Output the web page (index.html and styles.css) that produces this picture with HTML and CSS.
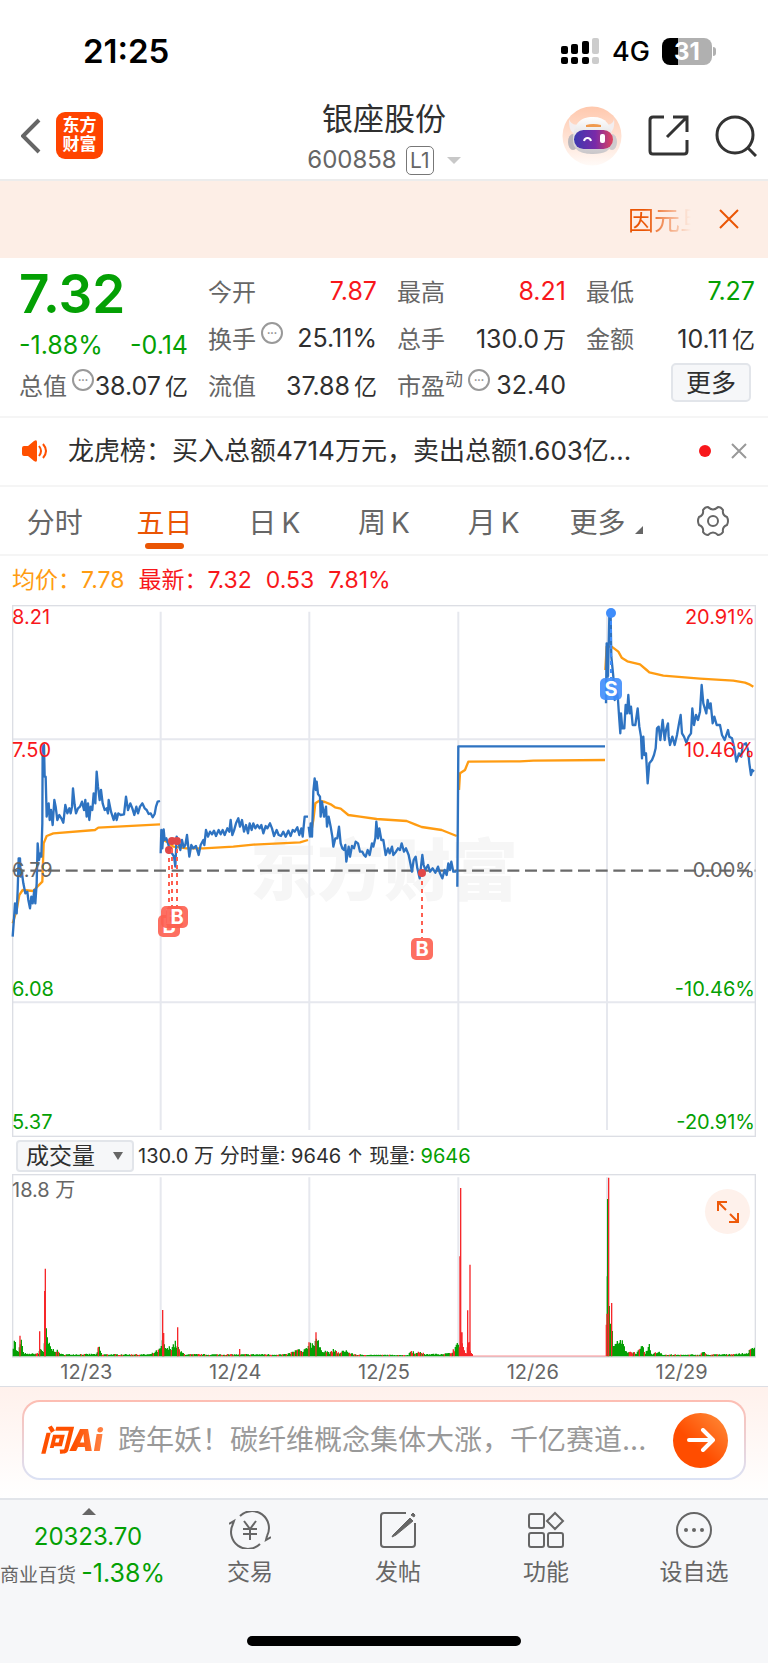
FILE: index.html
```html
<!DOCTYPE html>
<html lang="zh-CN">
<head>
  <meta charset="UTF-8">
  <meta name="viewport" content="width=device-width, initial-scale=1">
  <title>银座股份 600858</title>
  <link rel="stylesheet" href="styles.css">
</head>
<body>
  <div class="status-bar">
    <span class="time">21:25</span>
    <div class="status-right">
      <svg width="39" height="28" viewBox="0 0 39 28">
        <g fill="#000">
          <rect x="0" y="9" width="7" height="8" rx="2"/><rect x="0" y="20" width="7" height="7" rx="2"/>
          <rect x="10" y="7" width="7" height="10" rx="2"/><rect x="10" y="20" width="7" height="7" rx="2"/>
          <rect x="21" y="4" width="7" height="13" rx="2"/><rect x="21" y="20" width="7" height="7" rx="2"/>
        </g>
        <g fill="#ccc"><rect x="31" y="1" width="7" height="16" rx="2"/><rect x="31" y="20" width="7" height="7" rx="2"/></g>
      </svg>
      <span class="network">4G</span>
      <span class="battery">31</span>
    </div>
  </div>

  <header class="header">
    <div class="header-left">
      <a href="#" class="back" aria-label="返回">
        <svg width="20" height="36" viewBox="0 0 20 36"><path d="M18 2 2 18l16 16" fill="none" stroke="#666" stroke-width="4"/></svg>
      </a>
      <a href="#" class="logo">东方<br>财富</a>
    </div>
    <div class="header-title">
      <h1>银座股份</h1>
      <div class="code"><span>600858</span><span class="level">L1</span><i class="caret"></i></div>
    </div>
    <div class="header-right">
      <a href="#" aria-label="智能助手">
        <svg width="60" height="60" viewBox="0 0 60 60">
          <defs>
            <linearGradient id="halo" x1="0" y1="0" x2="0" y2="1"><stop offset="0" stop-color="#ffc8ad"/><stop offset="1" stop-color="#fffaf7"/></linearGradient>
            <linearGradient id="visor" x1="0" y1="0" x2="1" y2="0"><stop offset="0" stop-color="#3b39b0"/><stop offset=".55" stop-color="#7a2aa8"/><stop offset="1" stop-color="#e0455c"/></linearGradient>
            <linearGradient id="shell" x1="0" y1="0" x2="0" y2="1"><stop offset="0" stop-color="#fff"/><stop offset="1" stop-color="#c9c6c9"/></linearGradient>
          </defs>
          <circle cx="30" cy="30" r="29.500" fill="url(#halo)"/>
          <ellipse cx="11" cy="36" rx="5" ry="8" fill="#bbb7bb"/>
          <ellipse cx="50" cy="36" rx="5" ry="8" fill="#cfcbce"/>
          <path d="M7 13c0 8 1 13 6 15l8-10c-6 2-12 1-14-5zM52 13c1 8-1 12-5 15l-8-10c6 2 12 1 13-5z" fill="#f3eef0"/>
          <path d="M11 34c0-16 7-23 20-23s19 8 19 23c0 11-8 14-19 14s-20-3-20-14z" fill="url(#shell)"/>
          <path d="M24 19q7-2 15 0v2H24z" fill="#f09a4e"/>
          <rect x="12" y="24" width="39" height="19" rx="9.500" fill="url(#visor)"/>
          <path d="M22 35c1-4 6-4 7 0" fill="none" stroke="#fff" stroke-width="2"/>
          <rect x="38" y="28" width="5" height="9" rx="2" fill="#fff"/>
        </svg>
      </a>
      <a href="#" aria-label="分享">
        <svg width="41" height="41" viewBox="0 0 41 41" fill="none" stroke="#333" stroke-width="3">
          <path d="M16 2H5q-3 0-3 3v31q0 3 3 3h31q3 0 3-3V25"/><path d="M25 2h14v15M39 2 19 22"/>
        </svg>
      </a>
      <a href="#" aria-label="搜索">
        <svg width="42" height="42" viewBox="0 0 42 42" fill="none" stroke="#333" stroke-width="3"><circle cx="20" cy="20" r="18"/><path d="m33 33 8 8"/></svg>
      </a>
    </div>
  </header>

  <div class="banner">
    <span class="banner-text">因元旦</span>
    <button type="button" aria-label="关闭公告">
      <svg width="20" height="20" viewBox="0 0 20 20"><path d="m1 1 18 18M19 1 1 19" stroke="#ea5504" stroke-width="2"/></svg>
    </button>
  </div>

  <section class="quote">
    <div class="quote-col">
      <strong class="price">7.32</strong>
      <div class="change"><span>-1.88%</span><span>-0.14</span></div>
      <div class="item"><span class="name">总值</span><i class="info">•••</i><span class="num">38.07<small>亿</small></span></div>
    </div>
    <div class="quote-col">
      <div class="item"><span class="name">今开</span><span class="num red">7.87</span></div>
      <div class="item"><span class="name">换手</span><i class="info">•••</i><span class="num">25.11%</span></div>
      <div class="item"><span class="name">流值</span><span class="num">37.88<small>亿</small></span></div>
    </div>
    <div class="quote-col">
      <div class="item"><span class="name">最高</span><span class="num red">8.21</span></div>
      <div class="item"><span class="name">总手</span><span class="num">130.0<small>万</small></span></div>
      <div class="item"><span class="name">市盈<sup>动</sup></span><i class="info">•••</i><span class="num">32.40</span></div>
    </div>
    <div class="quote-col">
      <div class="item"><span class="name">最低</span><span class="num green">7.27</span></div>
      <div class="item"><span class="name">金额</span><span class="num">10.11<small>亿</small></span></div>
      <div class="item"><button type="button" class="more">更多</button></div>
    </div>
  </section>

  <div class="news">
    <svg width="26" height="22" viewBox="0 0 26 22">
      <path d="M0 8q0-2 2-2h4l6-5q3-2 3 1v18q0 3-3 1l-6-5H2q-2 0-2-2z" fill="#ff5000"/>
      <path d="M17 6q4 5 0 10M21 4q6 7 0 14" fill="none" stroke="#ff5000" stroke-width="2"/>
    </svg>
    <a href="#" class="news-text">龙虎榜：买入总额4714万元，卖出总额1.603亿...</a>
    <i class="dot"></i>
    <button type="button" aria-label="关闭消息">
      <svg width="16" height="16" viewBox="0 0 16 16"><path d="m1 1 14 14M15 1 1 15" stroke="#999" stroke-width="2"/></svg>
    </button>
  </div>

  <nav class="tabs">
    <a href="#">分时</a>
    <a href="#" class="active">五日</a>
    <a href="#">日&thinsp;K</a>
    <a href="#">周&thinsp;K</a>
    <a href="#">月&thinsp;K</a>
    <a href="#" class="more-tab">更多<i></i></a>
    <a href="#" aria-label="设置">
      <svg width="32" height="32" viewBox="0 0 32 32" fill="none" stroke="#666" stroke-width="2">
        <circle cx="16" cy="16" r="5"/>
        <path d="M11 2q5 5 10 0 3 0 5 3-1 5 4 7 2 4 0 8-5 2-4 7-2 3-5 3-5-5-10 0-3 0-5-3 1-5-4-7-2-4 0-8 5-2 4-7 2-3 5-3z" stroke-linejoin="round"/>
      </svg>
    </a>
  </nav>

  <div class="legend">
    <span class="avg">均价：7.78</span>
    <span>最新：7.32</span>
    <span>0.53</span>
    <span>7.81%</span>
  </div>

  <svg class="chart" viewBox="0 0 768 533">
    <text class="watermark" x="384" y="290" text-anchor="middle">东方财富</text>
    <g transform="scale(.33333)">
      <path class="grid" d="M482 20V1575M928 20V1575M1375 20V1575M1821 20V1575M38 403H2266M38 1192H2266"/>
      <rect class="frame" x="38" y="2" width="2228" height="1592"/>
      <path class="zero" d="M38 797H2266"/>
      <g id="lines"></g>
    </g>
    <g id="marks"></g>
    <g class="axis red"><text x="12" y="19">8.21</text><text x="12" y="152">7.50</text></g>
    <g class="axis"><text x="12" y="272">6.79</text></g>
    <g class="axis green"><text x="12" y="391">6.08</text><text x="12" y="524">5.37</text></g>
    <g class="axis red" text-anchor="end"><text x="755" y="19">20.91%</text><text x="755" y="152">10.46%</text></g>
    <g class="axis" text-anchor="end"><text x="755" y="272">0.00%</text></g>
    <g class="axis green" text-anchor="end"><text x="755" y="391">-10.46%</text><text x="755" y="524">-20.91%</text></g>
  </svg>

  <div class="volume-head">
    <div class="select-wrap">
      <select aria-label="指标"><option>成交量</option><option>MACD</option></select>
    </div>
    <span>130.0 万 分时量: 9646 ↑ 现量: <b>9646</b></span>
  </div>

  <div class="volume">
    <svg class="chart" viewBox="0 0 768 184">
      <g transform="scale(.33333)">
        <path class="grid" d="M482 10V547M928 10V547M1375 10V547M1821 10V547"/>
        <rect class="frame" x="38" y="2" width="2228" height="547"/>
        <path id="volGreen" stroke="#04a004" stroke-width="4"/>
        <path id="volRed" stroke="#f6272a" stroke-width="4"/>
      </g>
      <g class="axis"><text x="12" y="23">18.8 万</text></g>
    </svg>
    <button type="button" class="expand" aria-label="全屏">
      <svg width="24" height="24" viewBox="0 0 24 24" fill="none" stroke="#ee5a0a" stroke-width="2"><path d="M2 11V2h9M2 2l8 8M13 22h9v-9M22 22l-8-8"/></svg>
    </button>
  </div>
  <div class="dates"><span>12/23</span><span>12/24</span><span>12/25</span><span>12/26</span><span>12/29</span></div>

  <div class="ask">
    <div class="ask-box">
      <span class="ask-logo">问Ai</span>
      <input type="text" aria-label="问Ai" placeholder="跨年妖！碳纤维概念集体大涨，千亿赛道...">
      <button type="button" aria-label="发送">
        <svg width="28" height="24" viewBox="0 0 28 24" fill="none" stroke="#fff" stroke-width="4" stroke-linecap="round" stroke-linejoin="round"><path d="M2 12h23M16 2l10 10-10 10"/></svg>
      </button>
    </div>
  </div>

  <footer class="bottom">
    <nav class="bottom-nav">
      <a href="#" class="index">
        <i></i>
        <span class="points">20323.70</span>
        <span class="sector">商业百货 <b>-1.38%</b></span>
      </a>
      <a href="#">
        <svg viewBox="0 0 42 38">
          <path d="M11 5a17 17 0 0 1 27 20M38 25l-1 4 5-3M31 33A17 17 0 0 1 4 13M4 13l1-3-5 3"/>
          <path d="m15 10 6 8 6-8M21 18v11M14 18h14M14 23h14"/>
        </svg>
        交易
      </a>
      <a href="#">
        <svg viewBox="0 0 38 38">
          <path d="M27 2H5q-3 0-3 3v28q0 3 3 3h28q3 0 3-3V12"/>
          <path d="M14 24 31 7l3 3-17 14-4 2zM32 4l2-2 2 2-1 2z" fill="#666" stroke-width="1"/>
        </svg>
        发帖
      </a>
      <a href="#">
        <svg viewBox="0 0 38 38">
          <rect x="2" y="3" width="15" height="14" rx="2"/><rect x="2" y="22" width="15" height="14" rx="2"/><rect x="21" y="22" width="15" height="14" rx="2"/>
          <path d="m28 2 8 8-8 8-8-8z"/>
        </svg>
        功能
      </a>
      <a href="#">
        <svg viewBox="0 0 38 38">
          <circle cx="19" cy="19" r="17"/>
          <g fill="#666" stroke="none"><circle cx="11" cy="19" r="2"/><circle cx="19" cy="19" r="2"/><circle cx="27" cy="19" r="2"/></g>
        </svg>
        设自选
      </a>
    </nav>
    <div class="home-bar"></div>
  </footer>

  <script src="chart.js"></script>
</body>
</html>
```
FILE: styles.css
```css
* {
  box-sizing: border-box;
}
body {
  margin: 0;
  background: #fff;
  color: #2f2f2f;
  font-family: Inter, "Noto Sans CJK SC", sans-serif;
  font-size: 24px;
}
a {
  color: inherit;
  text-decoration: none;
}
button {
  padding: 0;
  border: none;
  background: none;
  font-family: inherit;
  color: inherit;
  cursor: pointer;
}
svg {
  display: block;
}
i {
  font-style: normal;
}
.red { color: #f8171b; }
.green { color: #04a004; }

/* 状态栏 */
.status-bar {
  display: flex;
  justify-content: space-between;
  align-items: center;
  height: 92px;
  padding: 10px 52px 0 83px;
  color: #000;
}
.time {
  font-size: 33px;
  font-weight: 600;
}
.status-right {
  display: flex;
  align-items: center;
}
.network {
  margin: 0 12px;
  font-size: 27px;
  font-weight: 500;
}
.battery {
  position: relative;
  width: 50px;
  height: 27px;
  margin-right: 4px;
  border-radius: 8px;
  background: linear-gradient(90deg, #000 32%, #b0b0b0 32%);
  color: #fff;
  font-size: 24px;
  font-weight: 700;
  line-height: 27px;
  text-align: center;
}
.battery::after {
  content: "";
  position: absolute;
  left: 51px;
  top: 9px;
  width: 3px;
  height: 9px;
  border-radius: 0 3px 3px 0;
  background: #b0b0b0;
}

/* 顶部 */
.header {
  display: grid;
  grid-template-columns: 1fr auto 1fr;
  align-items: center;
  height: 89px;
  padding: 0 11px;
  border-bottom: 2px solid #ececec;
}
.header-left,
.header-right {
  display: flex;
  align-items: center;
}
.header-left {
  gap: 15px;
  padding-left: 10px;
}
.header-right {
  justify-content: flex-end;
  gap: 26px;
}
.logo {
  width: 47px;
  height: 47px;
  padding-top: 4px;
  border-radius: 9px;
  background: #ff4400;
  color: #fff;
  font-size: 17px;
  font-weight: 700;
  line-height: 19px;
  text-align: center;
}
.header-title {
  padding-top: 5px;
}
.header-title h1 {
  margin: 0;
  font-size: 31px;
  font-weight: 400;
  line-height: 44px;
  text-align: center;
}
.code {
  display: flex;
  align-items: center;
  line-height: 38px;
  color: #666;
}
.level {
  width: 28px;
  height: 29px;
  margin: 0 13px 0 9px;
  border: 1px solid #777;
  border-radius: 5px;
  font-size: 21px;
  line-height: 27px;
  text-align: center;
}
.caret {
  border: 7px solid transparent;
  border-top-color: #c8c8c8;
  border-bottom: none;
}

.banner {
  display: flex;
  justify-content: flex-end;
  align-items: center;
  gap: 28px;
  height: 77px;
  padding: 0 29px 2px 0;
  background: #fdeee6;
}
.banner-text {
  width: 63px;
  overflow: hidden;
  white-space: nowrap;
  font-size: 26px;
  color: transparent;
  background: linear-gradient(90deg, #ea5504 25%, rgba(234, 85, 4, 0));
  -webkit-background-clip: text;
  background-clip: text;
}

/* 行情 */
.quote {
  display: grid;
  grid-template-columns: repeat(4, 1fr);
  gap: 20px;
  padding: 9px 13px 8px 19px;
  border-bottom: 2px solid #f5f5f5;
}
.price {
  display: block;
  font-size: 53px;
  font-weight: 600;
  line-height: 54px;
  padding-bottom: 6px;
  color: #04a004;
}
.change {
  display: flex;
  justify-content: space-between;
  font-size: 25px;
  line-height: 36px;
  height: 34px;
  color: #04a004;
}
.item {
  display: flex;
  align-items: center;
  height: 47px;
  white-space: nowrap;
}
.name {
  color: #666;
}
.name sup {
  font-size: 18px;
  line-height: 18px;
}
.num {
  margin-left: auto;
  font-size: 25px;
}
.num small {
  margin-left: 4px;
  font-size: 23px;
}
.info {
  width: 22px;
  height: 22px;
  margin: 0 0 10px 5px;
  border: 2px solid #999;
  border-radius: 50%;
  color: #888;
  font-size: 6px;
  line-height: 18px;
  text-align: center;
}
.more {
  width: 80px;
  height: 39px;
  margin: 0 4px 4px auto;
  border: 2px solid #e2e5ea;
  border-radius: 5px;
  background: #f6f7f9;
  font-size: 25px;
  line-height: 34px;
}

.news {
  display: flex;
  align-items: center;
  height: 69px;
  padding: 0 21px 2px 22px;
  border-bottom: 2px solid #f5f5f5;
}
.news-text {
  flex: 1;
  margin-left: 20px;
  font-size: 26px;
  line-height: 32px;
  white-space: nowrap;
}
.dot {
  width: 12px;
  height: 12px;
  margin-right: 20px;
  border-radius: 50%;
  background: #f8171b;
}

.tabs {
  display: grid;
  grid-template-columns: repeat(7, 1fr);
  height: 69px;
  border-bottom: 2px solid #f5f5f5;
  font-size: 28px;
  color: #666;
}
.tabs a {
  position: relative;
  display: flex;
  justify-content: center;
  align-items: center;
}
.tabs .active {
  color: #ea5504;
}
.tabs .active::after {
  content: "";
  position: absolute;
  bottom: 5px;
  width: 39px;
  height: 6px;
  border-radius: 3px;
  background: #ea5504;
}
.tabs .more-tab {
  padding-left: 6px;
}
.more-tab i {
  align-self: flex-end;
  margin: 0 0 20px 10px;
  border: 4px solid #666;
  border-top-color: transparent;
  border-left-color: transparent;
}

/* 走势图 */
.legend {
  display: flex;
  gap: 14px;
  padding-left: 12px;
  font-size: 23px;
  line-height: 49px;
  color: #f8171b;
}
.legend .avg {
  color: #ff9c12;
}
.chart {
  width: 100%;
  height: auto;
}
.chart path,
.chart polyline,
.chart rect.frame {
  fill: none;
}
.grid {
  stroke: #e6e8ee;
  stroke-width: 6;
}
.frame {
  stroke: #dcdee4;
  stroke-width: 4;
}
.zero {
  stroke: #6a6a6a;
  stroke-width: 7;
  stroke-dasharray: 36 17;
}
.watermark {
  fill: #f6f6f6;
  font-size: 67px;
  font-weight: 900;
}
.price-line,
.avg-line {
  stroke: #2e73c1;
  stroke-width: 7;
  stroke-linejoin: round;
}
.avg-line {
  stroke: #ff9c12;
}
.axis {
  font-size: 20px;
  fill: #666;
}
.axis.red { fill: #f8171b; }
.axis.green { fill: #04a004; }
.mark-text {
  fill: #fff;
  font-size: 20px;
  font-weight: 700;
  text-anchor: middle;
}

.volume-head {
  display: flex;
  align-items: center;
  gap: 4px;
  height: 36px;
  padding-left: 16px;
  font-size: 20px;
  line-height: 32px;
  white-space: nowrap;
}
.volume-head b {
  font-weight: 400;
  color: #04a004;
}
.select-wrap {
  position: relative;
}
.select-wrap::after {
  content: "";
  position: absolute;
  right: 11px;
  top: 12px;
  border: 5px solid transparent;
  border-top: 8px solid #666;
  border-bottom: none;
}
select {
  display: block;
  width: 118px;
  height: 32px;
  padding: 0 0 0 8px;
  appearance: none;
  border: 2px solid #e2e5ea;
  border-radius: 4px;
  background: #f6f7f9;
  color: #2f2f2f;
  font-family: inherit;
  font-size: 23px;
  line-height: 28px;
}
.volume {
  position: relative;
}
.expand {
  position: absolute;
  right: 18px;
  top: 15px;
  display: flex;
  justify-content: center;
  align-items: center;
  width: 45px;
  height: 45px;
  border-radius: 50%;
  background: #fef1eb;
}
.dates {
  display: grid;
  grid-template-columns: repeat(5, 1fr);
  padding: 0 12px;
  font-size: 20px;
  line-height: 28px;
  color: #666;
  text-align: center;
}

/* 问Ai */
.ask {
  padding: 13px 22px 18px;
  border-top: 1px solid #dcdee4;
  background: linear-gradient(#fff1ec, #fff);
}
.ask-box {
  display: flex;
  align-items: center;
  height: 80px;
  padding: 0 16px;
  border: 2px solid transparent;
  border-radius: 18px;
  background: linear-gradient(#fff, #fff) padding-box, linear-gradient(#fdbdb2, #dbe2f5) border-box;
}
.ask-logo {
  flex: none;
  width: 68px;
  font-size: 30px;
  font-weight: 900;
  font-style: italic;
  line-height: 40px;
  white-space: nowrap;
  color: transparent;
  background: linear-gradient(90deg, #ff5000 50%, #ff8a50);
  -webkit-background-clip: text;
  background-clip: text;
}
.ask-box input {
  flex: 1;
  min-width: 0;
  margin-left: 10px;
  padding: 0;
  border: none;
  outline: none;
  background: none;
  font-family: inherit;
  font-size: 28px;
}
.ask-box input::placeholder {
  color: #999;
}
.ask-box button {
  display: flex;
  justify-content: center;
  align-items: center;
  width: 55px;
  height: 55px;
  border-radius: 50%;
  background: linear-gradient(45deg, #ff4d00 40%, #ff8f3c);
}

/* 底部 */
.bottom {
  padding-bottom: 17px;
  border-top: 2px solid #e2e5ea;
  background: #f6f7f9;
}
.bottom-nav {
  display: grid;
  grid-template-columns: 176fr 148fr 148fr 148fr 148fr;
  height: 136px;
  color: #666;
}
.bottom-nav a {
  display: flex;
  flex-direction: column;
  align-items: center;
  padding-top: 11px;
  font-size: 23px;
  line-height: 46px;
  white-space: nowrap;
}
.bottom-nav svg {
  height: 38px;
  fill: none;
  stroke: #666;
  stroke-width: 2;
}
.bottom-nav .index {
  align-items: flex-start;
  padding-top: 8px;
}
.index i {
  margin-left: 82px;
  border: 7px solid transparent;
  border-top: none;
  border-bottom-color: #666;
}
.index .points {
  width: 176px;
  font-size: 24px;
  line-height: 44px;
  text-align: center;
  color: #04a004;
}
.index .sector {
  font-size: 19px;
  line-height: 28px;
}
.index b {
  font-size: 25px;
  font-weight: 400;
  color: #04a004;
}
.home-bar {
  width: 274px;
  height: 10px;
  margin: 0 auto;
  border-radius: 5px;
  background: #000;
}
```
FILE: chart.js
```js
const NS = 'http://www.w3.org/2000/svg';

// 每日走势: x 为当日分组的横向偏移
const days = [
  {
    x: 0,
    avg: '38,1000 50,960 58,915 68,900 100,903 112,890 127,875 131,760 140,738 160,730 285,720 295,713 480,703',
    price: '38,1040 42,985 45,940 50,970 53,900 56,805 60,805 62,860 66,850 70,880 76,910 82,905 85,930 90,955 94,920 98,940 103,900 106,940 110,880 113,760 117,810 121,790 124,800 127,700 128,465 132,465 134,560 137,560 140,680 146,640 149,690 153,660 158,705 163,630 167,650 172,690 178,675 184,685 190,698 196,645 202,670 208,655 212,670 216,650 219,595 224,645 228,670 234,655 240,650 246,635 252,660 256,630 260,680 264,640 268,690 272,650 277,660 281,610 286,640 290,545 294,590 299,630 303,600 308,640 314,660 320,655 324,670 326,630 333,665 341,690 346,670 350,690 355,670 362,675 372,673 378,620 384,660 391,640 397,655 403,675 409,650 414,670 420,650 427,640 434,655 440,660 446,672 452,670 458,682 464,672 468,650 473,635 480,633'
  },
  {
    x: 0,
    avg: '490,750 500,755 520,770 560,775 610,775 700,770 760,764 900,757 924,750',
    price: '482,790 484,720 487,775 491,718 494,750 499,745 504,760 510,780 516,790 522,800 526,830 530,740 536,760 541,780 546,750 551,772 556,765 561,735 568,800 574,765 580,775 588,768 596,795 602,765 610,750 613,765 618,720 624,740 630,725 636,733 642,722 648,738 656,720 662,733 668,720 674,735 682,715 688,725 692,690 697,735 702,722 708,700 715,685 720,710 726,690 732,725 738,705 744,730 749,700 755,720 760,700 766,715 772,705 779,715 784,705 790,730 797,708 802,715 810,700 816,715 822,738 830,720 836,735 843,738 850,725 857,740 865,722 872,738 878,720 884,725 892,712 898,735 904,715 908,740 914,680 924,680'
  },
  {
    x: 900,
    avg: '32,735 40,690 46,640 58,632 75,636 92,643 105,652 122,656 145,675 180,680 230,687 320,693 345,703 365,711 425,720 470,738',
    price: '26,710 30,740 32,700 36,740 40,605 44,565 48,600 50,575 54,612 60,620 62,680 66,635 72,680 78,650 81,710 86,680 92,710 97,740 100,770 106,745 112,745 117,710 122,760 127,775 132,780 136,765 139,815 146,770 150,800 156,768 162,775 167,755 174,760 180,785 187,785 192,795 197,800 203,780 209,795 216,760 220,770 226,745 229,695 234,745 238,715 244,750 250,750 257,795 264,775 269,790 276,770 280,795 288,785 294,775 300,780 305,760 312,785 318,775 326,795 331,820 336,845 341,810 347,800 352,835 359,865 363,830 367,795 371,825 376,840 384,825 390,845 398,835 406,848 414,830 420,850 427,865 434,840 440,855 445,820 450,840 454,815 460,845 468,845'
  },
  {
    x: 900,
    avg: '477,600 480,550 495,540 505,515 660,514 700,512 915,510',
    price: '472,890 475,469 915,469'
  },
  {
    x: 1770,
    avg: '46,240 50,170 65,170 85,185 95,203 112,214 150,223 170,240 178,247 220,257 330,266 430,272 465,278 480,284 490,290',
    price: '48,340 50,160 54,260 58,80 62,80 64,200 70,260 74,330 80,300 84,330 88,390 91,430 93,370 97,415 103,415 107,345 111,370 115,315 119,370 123,350 128,405 136,405 143,355 148,410 153,440 156,505 160,440 163,495 168,490 173,580 178,520 186,510 192,495 197,475 201,415 206,410 211,450 218,390 224,450 228,420 234,400 236,440 240,465 247,440 254,465 261,435 268,395 272,375 276,430 282,440 289,458 296,440 303,430 307,355 312,405 318,375 324,390 330,365 335,285 340,340 349,370 353,330 358,355 362,340 368,400 373,380 380,405 390,405 396,435 404,450 414,420 418,440 426,445 432,470 439,515 447,490 454,500 458,465 468,460 474,480 478,520 483,555 487,540 492,545'
  }
];

function add(parent, tag, attrs, text) {
  const el = document.createElementNS(NS, tag);
  for (const key in attrs) el.setAttribute(key, attrs[key]);
  if (text) el.textContent = text;
  parent.appendChild(el);
  return el;
}

const lines = document.getElementById('lines');
days.forEach(d => {
  const transform = `translate(${d.x} -45)`;
  add(lines, 'polyline', { class: 'avg-line', points: d.avg, transform });
  add(lines, 'polyline', { class: 'price-line', points: d.price, transform });
});

// 买卖点
const marks = [
  { t: 'B', x: 169, dot: 245, y: 321 },
  { t: 'B', x: 172, dot: 236, y: 312 },
  { t: 'B', x: 177, dot: 236, y: 312 },
  { t: 'B', x: 422, dot: 268, y: 344 },
  { t: 'S', x: 611, dot: 8, y: 84 }
];
const markLayer = document.getElementById('marks');
marks.forEach(m => {
  const sell = m.t === 'S';
  const color = sell ? '#3f8dfb' : '#fd5f50';
  add(markLayer, 'path', { d: `M${m.x} ${m.dot}V${m.y - 11}`, stroke: color, 'stroke-width': 2, 'stroke-dasharray': '4 4' });
  add(markLayer, 'circle', { cx: m.x, cy: m.dot, r: sell ? 5 : 4, fill: sell ? color : '#e04848' });
  add(markLayer, 'rect', { x: m.x - 11, y: m.y - 11, width: 22, height: 22, rx: 5, fill: color, opacity: 0.9 });
  add(markLayer, 'text', { class: 'mark-text', x: m.x, y: m.y + 7 }, m.t);
});

// 成交量
const profile = [[38,20],[43,60],[50,15],[56,12],[63,55],[70,10],[80,6],[115,8],[122,25],[130,15],[138,80],[145,40],[155,20],[170,18],[185,5],[290,6],[298,28],[305,5],[450,5],[480,20],[488,45],[500,20],[515,30],[527,40],[540,15],[555,5],[860,5],[895,20],[910,12],[925,35],[940,40],[950,60],[960,22],[990,10],[1000,18],[1020,8],[1035,20],[1050,8],[1075,4],[1225,3],[1233,18],[1250,8],[1260,15],[1275,5],[1350,8],[1378,40],[1385,50],[1395,10],[1400,8],[1405,50],[1415,10],[1420,1],[1818,1],[1824,470],[1829,110],[1840,50],[1855,35],[1862,50],[1880,15],[1910,10],[1928,28],[1935,8],[1948,30],[1955,5],[1978,14],[1990,4],[2100,4],[2111,16],[2118,4],[2170,5],[2240,8],[2262,28],[2270,28]];
const spikes = [[60,62],[119,75],[134,196],[136,263],[295,28],[488,139],[491,70],[533,87],[719,22],[927,42],[948,72],[1380,300],[1382,505],[1386,72],[1403,138],[1410,275],[1821,128],[1825,536],[1835,160]];
const base = 547;
let green = `M1823 ${base}v-472`;
let red = '';
let seed = 7;

const rand = () => {
  seed = (seed * 16807) % 2147483647;
  return seed / 2147483647;
};

let p = 0;
for (let x = 40; x < 2264; x += 3) {
  while (profile[p + 1][0] < x) p++;
  const [x0, h0] = profile[p];
  const [x1, h1] = profile[p + 1];
  const h = Math.round((h0 + (h1 - h0) * (x - x0) / (x1 - x0)) * (0.6 + rand() * 0.6)) + 1;
  const bar = `M${x} ${base}v${-h}`;
  if (x > 1375 && x < 1820) red += bar;
  else if (rand() < 0.22 && h < 22) red += bar;
  else green += bar;
}
spikes.forEach(([x, h]) => {
  // 开盘的红柱在绿柱右侧
  red += `M${x === 1825 ? 1826 : x} ${base}v${-h}`;
});
document.getElementById('volGreen').setAttribute('d', green);
document.getElementById('volRed').setAttribute('d', red);
```
